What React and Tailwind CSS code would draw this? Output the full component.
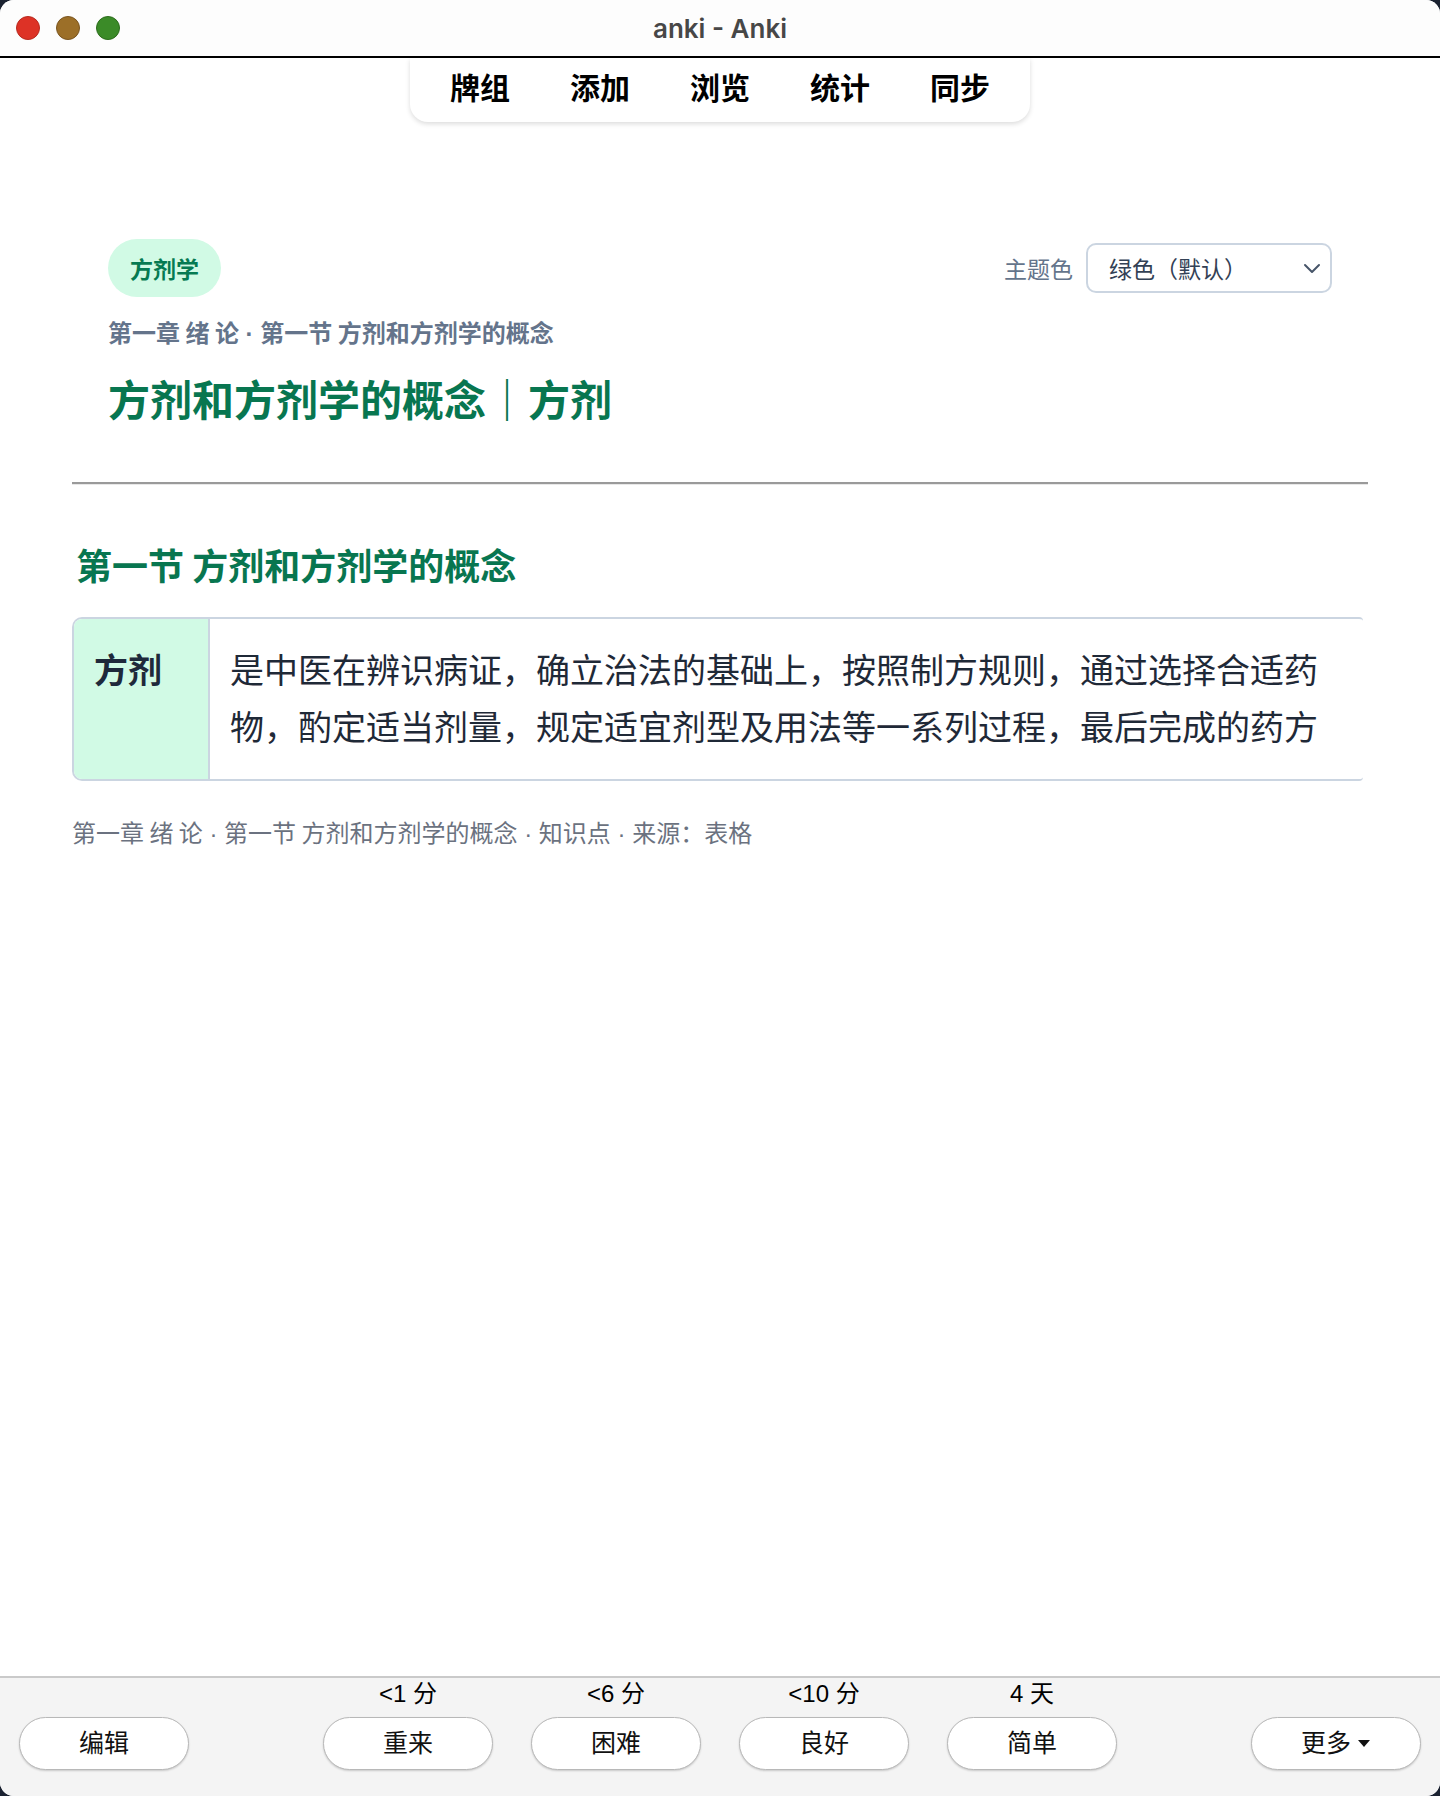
import React from "react";

const CJK = "font-['Noto_Sans_CJK_SC','Noto_Sans',sans-serif]";

function Dot() {
  return <span className="font-['Liberation_Sans',sans-serif]"> · </span>;
}

function AnswerCol({ label, text }) {
  return (
    <div className="flex w-[170px] flex-col items-center">
      <div className="h-[28px] text-[24px] leading-[28px] text-black font-['Liberation_Sans','Noto_Sans_CJK_SC',sans-serif]">
        {label}
      </div>
      <Btn className="mt-[9px]">{text}</Btn>
    </div>
  );
}

function Btn({ children, className = "" }) {
  return (
    <button
      className={
        "flex h-[53px] w-[170px] items-center justify-center rounded-full border-[1.5px] border-[#b8b8b8] bg-white text-[25px] text-[#111] shadow-[0_1px_2px_rgba(0,0,0,0.18)] font-['Liberation_Sans','Noto_Sans_CJK_SC',sans-serif] " +
        className
      }
    >
      {children}
    </button>
  );
}

export default function App() {
  return (
    <div className="h-[1796px] w-[1440px] bg-[#1b2231]">
      <div className={"flex h-[1796px] w-[1440px] flex-col overflow-hidden rounded-[14px] bg-white " + CJK}>
        {/* Title bar */}
        <div className="grid h-[56px] grid-cols-[1fr_auto_1fr] items-center bg-[#fdfdfd]">
          <div className="flex items-center gap-[16px] pl-[16px]">
            <span className="h-[24px] w-[24px] rounded-full border border-[#b82a1f] bg-[#dd3226]" />
            <span className="h-[24px] w-[24px] rounded-full border border-[#7a5520] bg-[#9c6f28]" />
            <span className="h-[24px] w-[24px] rounded-full border border-[#2c6c1c] bg-[#3b8b28]" />
          </div>
          <div className="text-[26px] font-semibold text-[#474747] font-['Inter','Liberation_Sans',sans-serif]">
            anki - Anki
          </div>
          <div />
        </div>
        <div className="h-[2px] bg-black" />

        {/* Top nav */}
        <div className="flex justify-center">
          <div className="flex h-[64px] items-center rounded-b-[18px] bg-white px-[10px] pb-[8px] shadow-[0_2px_5px_rgba(0,0,0,0.14)]">
            {["牌组", "添加", "浏览", "统计", "同步"].map((t) => (
              <div key={t} className="px-[30px] text-[30px] font-bold leading-[40px] text-black">
                {t}
              </div>
            ))}
          </div>
        </div>

        {/* Content */}
        <div className="mx-[72px] flex flex-col">
          <div className="px-[36px] pt-[117px]">
            <div className="flex items-center justify-between">
              <div className="flex h-[58px] items-center rounded-full bg-[#d1fae5] px-[22px] text-[23px] font-semibold text-[#067a52]">
                方剂学
              </div>
              <div className="flex items-center gap-[13px]">
                <span className="text-[23px] text-[#64748b]">主题色</span>
                <div className="flex h-[50px] w-[246px] items-center justify-between rounded-[10px] border-2 border-[#cbd5e1] bg-white pl-[21px] pr-[9px]">
                  <span className="text-[23px] text-[#334155]">绿色（默认）</span>
                  <svg width="18" height="11" viewBox="0 0 18 11" fill="none">
                    <path d="M2 2 L9 9 L16 2" stroke="#475569" strokeWidth="2" strokeLinecap="round" strokeLinejoin="round" />
                  </svg>
                </div>
              </div>
            </div>
            <div className="mt-[19px] text-[24px] font-semibold leading-[32px] text-[#64748b]">
              第一章 绪 论<Dot />第一节 方剂和方剂学的概念
            </div>
            <div className="mt-[22px] text-[42px] font-bold leading-[52px] text-[#087650]">
              方剂和方剂学的概念｜方剂
            </div>
          </div>

          <div className="mt-[58px] h-[3px] border-t-2 border-b border-t-[#9a9a9a] border-b-[#e8e8e8]" />

          <div className="mt-[56px] pl-[4px] text-[36px] font-bold leading-[46px] text-[#087650]">
            第一节 方剂和方剂学的概念
          </div>

          <div className="mt-[30px] flex w-[1291px] overflow-hidden rounded-l-[10px] rounded-r-[4px] border-y-2 border-l-2 border-[#cbd5e1]">
            <div className="w-[136px] shrink-0 border-r-2 border-[#cbd5e1] bg-[#d1fae5] px-[20px] pt-[21px] pb-[25px] text-[34px] font-bold leading-[57px] text-[#1e293b]">
              方剂
            </div>
            <div className="flex-1 px-[20px] pt-[21px] pb-[25px] text-[34px] leading-[57px] text-[#1f2937]">
              是中医在辨识病证，确立治法的基础上，按照制方规则，通过选择合适药物，酌定适当剂量，规定适宜剂型及用法等一系列过程，最后完成的药方
            </div>
          </div>

          <div className="mt-[35px] text-[24px] leading-[32px] text-[#6b7280]">
            第一章 绪 论<Dot />第一节 方剂和方剂学的概念<Dot />知识点<Dot />来源：表格
          </div>
        </div>

        <div className="flex-1" />

        {/* Bottom bar */}
        <div className="h-[120px] border-t-2 border-[#cacaca] bg-[#f4f4f4] pt-[2px]">
          <div className="grid grid-cols-[1fr_auto_1fr] items-end px-[19px]">
            <div className="flex justify-start">
              <Btn>编辑</Btn>
            </div>
            <div className="flex gap-[38px]">
              <AnswerCol label="<1 分" text="重来" />
              <AnswerCol label="<6 分" text="困难" />
              <AnswerCol label="<10 分" text="良好" />
              <AnswerCol label="4 天" text="简单" />
            </div>
            <div className="flex justify-end">
              <Btn>
                <span>更多</span>
                <svg className="ml-[6px]" width="14" height="9" viewBox="0 0 14 9">
                  <polygon points="1,1 13,1 7,8" fill="#111" />
                </svg>
              </Btn>
            </div>
          </div>
        </div>
      </div>
    </div>
  );
}
